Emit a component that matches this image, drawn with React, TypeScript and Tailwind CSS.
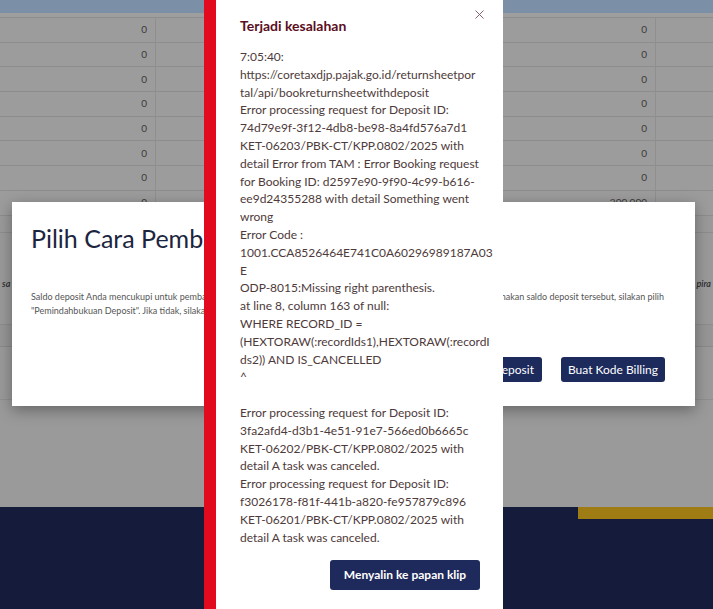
import { X } from "lucide-react";

const font = { fontFamily: "'Segoe UI', Lato, 'Open Sans', sans-serif" };

const errorLines = [
  "7:05:40:",
  "https://coretaxdjp.pajak.go.id/returnsheetpor",
  "tal/api/bookreturnsheetwithdeposit",
  "Error processing request for Deposit ID:",
  "74d79e9f-3f12-4db8-be98-8a4fd576a7d1",
  "KET-06203/PBK-CT/KPP.0802/2025 with",
  "detail Error from TAM : Error Booking request",
  "for Booking ID: d2597e90-9f90-4c99-b616-",
  "ee9d24355288 with detail Something went",
  "wrong",
  "Error Code :",
  "1001.CCA8526464E741C0A60296989187A03",
  "E",
  "ODP-8015:Missing right parenthesis.",
  "at line 8, column 163 of null:",
  "WHERE RECORD_ID =",
  "(HEXTORAW(:recordIds1),HEXTORAW(:recordI",
  "ds2)) AND IS_CANCELLED",
  "^",
  " ",
  "Error processing request for Deposit ID:",
  "3fa2afd4-d3b1-4e51-91e7-566ed0b6665c",
  "KET-06202/PBK-CT/KPP.0802/2025 with",
  "detail A task was canceled.",
  "Error processing request for Deposit ID:",
  "f3026178-f81f-441b-a820-fe957879c896",
  "KET-06201/PBK-CT/KPP.0802/2025 with",
  "detail A task was canceled.",
];

const TableRow = ({ right }: { right?: string }) => (
  <div className="grid grid-cols-[156px_500px_1fr] h-[24.7px] border-b border-[#8d8d8d] bg-[#9c9c9c] text-[10px] text-[#3a3a3a]">
    <div className="flex items-center justify-end pr-[8px] border-r border-[#8f8f8f]">0</div>
    <div className="flex items-center justify-end pr-[8px] border-r border-[#8f8f8f]">{right ?? "0"}</div>
    <div />
  </div>
);

export default function App() {
  return (
    <div className="relative w-[713px] h-[609px] overflow-hidden bg-[#9a9a9a]" style={font}>
      {/* page behind the overlay */}
      <div className="flex flex-col h-full">
        <div className="h-[13px] bg-[#7b8fa6]" />
        <div className="h-[5px] bg-[#9e9e9e] border-b border-[#8d8d8d]" />
        {Array.from({ length: 7 }).map((_, i) => (
          <TableRow key={i} />
        ))}
        <TableRow right="200.000" />
        <div className="h-[17px] border-b border-[#8d8d8d]" />
        <div className="h-[45px]" />
        <div className="flex justify-between px-[2px] text-[9px] leading-[12px] italic font-semibold text-[#2c2c2c]">
          <span>sa</span>
          <span>pira</span>
        </div>
        <div className="h-[35px] border-b border-[#8d8d8d]" />
        <div className="h-[22px] bg-[#969696] border-b border-[#8a8a8a]" />
        <div className="flex-1 border-t border-[#8f8f8f] mt-[52px]" />
        <div className="relative h-[102px] bg-[#141b3b]">
          <div className="absolute right-0 top-0 w-[135px] h-[12px] bg-[#a07c14]" />
        </div>
      </div>

      {/* payment modal */}
      <div className="absolute left-[12px] top-[202px] w-[683px] h-[204px] bg-white shadow-[0_4px_14px_rgba(0,0,0,0.35)] flex flex-col px-[19px]">
        <h2 className="pt-[19px] text-[25px] leading-[34px] text-[#1c2540]">Pilih Cara Pembayaran</h2>
        <div className="mt-[35px] text-[9px] leading-[14px] text-[#555]">
          <div className="flex justify-between pr-[12px] whitespace-nowrap">
            <span>Saldo deposit Anda mencukupi untuk pembayaran SPT ini.</span>
            <span>Jika Anda ingin menggunakan saldo deposit tersebut, silakan pilih</span>
          </div>
          <div>"Pemindahbukuan Deposit". Jika tidak, silakan pilih "Buat Kode Billing".</div>
        </div>
        <div className="mt-auto mb-[24px] flex justify-end gap-[19px] pr-[11px]">
          <button className="h-[25px] px-[8px] rounded-[3px] bg-[#1d2a5c] text-white text-[12px]">Pemindahbukuan Deposit</button>
          <button className="h-[25px] w-[104px] rounded-[3px] bg-[#1d2a5c] text-white text-[12px]">Buat Kode Billing</button>
        </div>
      </div>

      {/* error toast */}
      <div className="absolute left-[204px] top-0 w-[299px] h-full bg-white border-l-[12px] border-[#e10a1e] flex flex-col pl-[24px] pr-[23px]">
        <div className="flex items-start justify-between pt-[16px]">
          <h3 className="text-[14px] font-bold leading-[20px] text-[#5a0e1e]">Terjadi kesalahan</h3>
          <X className="w-[15px] h-[15px] mt-[-9px] mr-[-7px] text-[#7c5a68]" strokeWidth={1.5} />
        </div>
        <div className="mt-[12px] text-[12px] leading-[17.8px] text-[#4e3a3a]">
          {errorLines.map((line, i) => (
            <div key={i} className="whitespace-pre">{line}</div>
          ))}
        </div>
        <div className="flex justify-end mt-[14px]">
          <button className="h-[30px] w-[150px] rounded-[3px] bg-[#1f2a5c] text-white text-[12px] font-bold">
            Menyalin ke papan klip
          </button>
        </div>
      </div>
    </div>
  );
}
